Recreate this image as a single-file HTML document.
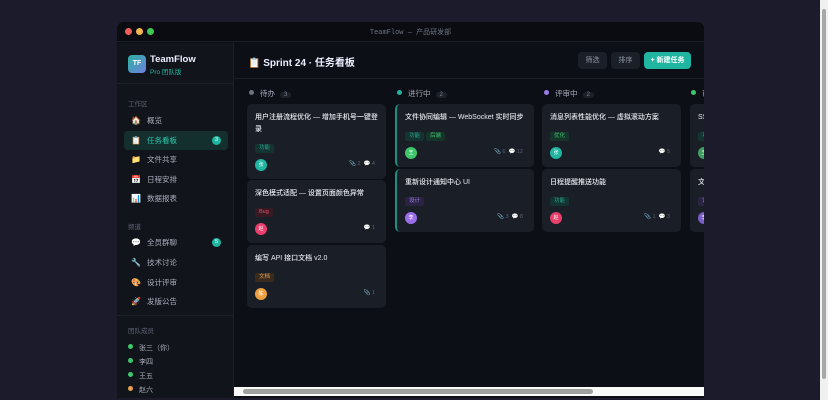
<!DOCTYPE html>
<html><head><meta charset="utf-8"><style>
*{box-sizing:border-box;margin:0;padding:0}
body{width:828px;height:400px;background:#1b1b2c;font-family:"Liberation Sans","Noto Sans CJK SC",sans-serif;overflow:hidden;position:relative;color:#e6e8ee}
.win{position:absolute;left:117px;top:22px;width:587px;height:376px;background:#0c0f16;border-radius:7px 7px 0 0;overflow:hidden}
.tb{position:absolute;left:0;top:0;width:587px;height:20px;background:#0a0c11;border-bottom:1px solid #1a1e27}
.dot{position:absolute;top:6px;width:7px;height:7px;border-radius:50%}
.tt{position:absolute;left:0;right:0;top:5px;text-align:center;font-family:"Liberation Mono","Noto Sans CJK SC",monospace;font-size:7px;color:#6b7280}
.sb{position:absolute;left:0;top:21px;width:117px;height:360px;background:#11141b;border-right:1px solid #1c2029}
.logo{position:absolute;left:11px;top:12px;width:18px;height:18px;border-radius:4px;background:linear-gradient(135deg,#2ab3a0,#6f7fe0);color:#fff;font-size:7px;font-weight:bold;text-align:center;line-height:18px}
.bn{position:absolute;left:33px;top:11px;font-size:9.5px;font-weight:bold;color:#eef}
.bs{position:absolute;left:33px;top:23px;font-size:6.5px;color:#20b8a0}
.hr{position:absolute;left:0;width:117px;height:1px;background:#1c2029}
.lab{position:absolute;left:11px;font-size:6.5px;color:#5d6472}
.it{position:absolute;left:7px;width:104px;height:19px;border-radius:4px;font-size:7.5px;color:#a9aebb;line-height:19px;padding-left:23px}
.it i{position:absolute;left:7px;top:0;font-style:normal;font-size:8px}
.it.act{background:#13302f;color:#2cc7ad}
.bdg{position:absolute;right:7px;top:5px;width:9px;height:9px;border-radius:50%;background:#1fb5a0;color:#fff;font-size:5.5px;text-align:center;line-height:9px}
.mem{position:absolute;left:11px;font-size:7px;color:#a9aebb}
.mem b{display:inline-block;width:5px;height:5px;border-radius:50%;margin-right:6px;vertical-align:1px}
.hd{position:absolute;left:117px;top:21px;width:470px;height:36px;border-bottom:1px solid #1a1e27}
.ht{position:absolute;left:14px;top:11px;font-size:10px;font-weight:bold;color:#eef}
.btn{position:absolute;top:9px;height:17px;border-radius:4px;font-size:7px;line-height:17px;text-align:center;background:#1b1f28;color:#8d93a0}
.ch{position:absolute;top:66px;font-size:7.5px;color:#a9aebb;white-space:nowrap}
.ch b{display:inline-block;width:5px;height:5px;border-radius:50%;margin-right:6px;vertical-align:1px}
.ch span{display:inline-block;background:#1d212a;border-radius:4px;padding:0 4px;font-size:6px;margin-left:5px;color:#7a8090}
.card{position:absolute;width:139px;background:#1a1e27;border-radius:5px;padding:8px 7px 8px 8px}
.card.pg{border-left:2px solid #1c8f80}
.ct{font-size:7px;color:#e8eaf0;line-height:12px;font-weight:500;white-space:nowrap;overflow:hidden}
.tag{display:inline-block;font-size:5.5px;padding:0 4px;height:9px;line-height:9px;border-radius:2px;margin:4px 2px 0 0}
.ft{position:relative;height:12px;margin-top:5px}
.av{position:absolute;left:0;top:0;width:12px;height:12px;border-radius:50%;color:#fff;font-size:5px;text-align:center;line-height:12px}
.mt{position:absolute;right:4px;top:2px;font-size:5.5px;color:#5d6472}
.hs{position:absolute;left:234px;top:387px;width:470px;height:9px;background:#fafafa}
.hs div{position:absolute;left:9px;top:2px;width:350px;height:5px;background:#a0a0a0;border-radius:3px}
.vs{position:absolute;left:820px;top:0;width:8px;height:400px;background:#f0f0f0}
.vs div{position:absolute;left:2px;top:9px;width:4px;height:370px;background:#a8a8a8;border-radius:2px}
</style></head><body>
<div class="win">
 <div class="tb"><div class="dot" style="left:8px;background:#ee5f5a"></div><div class="dot" style="left:19px;background:#f4b650"></div><div class="dot" style="left:30px;background:#3fc653"></div><div class="tt">TeamFlow — 产品研发部</div></div>
 <div class="sb">
  <div class="logo">TF</div><div class="bn">TeamFlow</div><div class="bs">Pro 团队版</div>
  <div class="hr" style="top:40px"></div>
  <div class="lab" style="top:55px">工作区</div>
  <div class="it" style="top:68px"><i>🏠</i>概览</div>
  <div class="it act" style="top:88px"><i>📋</i>任务看板<span class="bdg">3</span></div>
  <div class="it" style="top:107px"><i>📁</i>文件共享</div>
  <div class="it" style="top:127px"><i>📅</i>日程安排</div>
  <div class="it" style="top:146px"><i>📊</i>数据报表</div>
  <div class="lab" style="top:178px">频道</div>
  <div class="it" style="top:190px"><i>💬</i>全员群聊<span class="bdg">5</span></div>
  <div class="it" style="top:210px"><i>🔧</i>技术讨论</div>
  <div class="it" style="top:230px"><i>🎨</i>设计评审</div>
  <div class="it" style="top:249px"><i>🚀</i>发版公告</div>
  <div class="hr" style="top:272px"></div>
  <div class="lab" style="top:282px">团队成员</div>
  <div class="mem" style="top:300px"><b style="background:#3fc66a"></b>张三（你）</div>
  <div class="mem" style="top:314px"><b style="background:#3fc66a"></b>李四</div>
  <div class="mem" style="top:328px"><b style="background:#3fc66a"></b>王五</div>
  <div class="mem" style="top:342px"><b style="background:#e8a050"></b>赵六</div>
 </div>
 <div class="hd"><div class="ht">📋 Sprint 24 · 任务看板</div>
  <div class="btn" style="left:344px;width:29px">筛选</div>
  <div class="btn" style="left:377px;width:29px">排序</div>
  <div class="btn" style="left:410px;width:47px;background:#1fb5a0;color:#fff;font-weight:bold">+ 新建任务</div>
 </div>
 <div class="ch" style="left:132px"><b style="background:#6b7280"></b>待办<span>3</span></div>
 <div class="ch" style="left:280px"><b style="background:#1fb5a0"></b>进行中<span>2</span></div>
 <div class="ch" style="left:427px"><b style="background:#9b7de8"></b>评审中<span>2</span></div>
 <div class="ch" style="left:574px"><b style="background:#3fc66a"></b>已完成</div>

 <div class="card" style="left:130px;top:82px"><div class="ct">用户注册流程优化 — 增加手机号一键登<br>录</div><span class="tag" style="background:#133430;color:#2aa08f">功能</span><div class="ft"><div class="av" style="background:#1fb5a0">张</div><div class="mt">📎 2 &nbsp;💬 4</div></div></div>
 <div class="card" style="left:130px;top:158px"><div class="ct">深色模式适配 — 设置页面颜色异常</div><span class="tag" style="background:#3a1a22;color:#e0506a">Bug</span><div class="ft"><div class="av" style="background:#e83e6c">赵</div><div class="mt">💬 1</div></div></div>
 <div class="card" style="left:130px;top:223px"><div class="ct">编写 API 接口文档 v2.0</div><span class="tag" style="background:#3a2a1c;color:#e0a060">文档</span><div class="ft"><div class="av" style="background:#eea040">陈</div><div class="mt">📎 1</div></div></div>

 <div class="card pg" style="left:278px;top:82px"><div class="ct">文件协同编辑 — WebSocket 实时同步</div><span class="tag" style="background:#133430;color:#2aa08f">功能</span><span class="tag" style="background:#16352a;color:#3fbf70">后端</span><div class="ft"><div class="av" style="background:#3fc66a">王</div><div class="mt">📎 6 &nbsp;💬 12</div></div></div>
 <div class="card pg" style="left:278px;top:147px"><div class="ct">重新设计通知中心 UI</div><span class="tag" style="background:#2a2342;color:#9b7de8">设计</span><div class="ft"><div class="av" style="background:#9b6de8">李</div><div class="mt">📎 3 &nbsp;💬 8</div></div></div>

 <div class="card" style="left:425px;top:82px"><div class="ct">消息列表性能优化 — 虚拟滚动方案</div><span class="tag" style="background:#16352a;color:#3fbf70">优化</span><div class="ft"><div class="av" style="background:#1fb5a0">张</div><div class="mt">💬 5</div></div></div>
 <div class="card" style="left:425px;top:147px"><div class="ct">日程提醒推送功能</div><span class="tag" style="background:#133430;color:#2aa08f">功能</span><div class="ft"><div class="av" style="background:#e83e6c">赵</div><div class="mt">📎 1 &nbsp;💬 3</div></div></div>

 <div class="card" style="left:573px;top:82px"><div class="ct">SSO 单点登录</div><span class="tag" style="background:#133430;color:#2aa08f">功能</span><div class="ft"><div class="av" style="background:#3fa060">王</div></div></div>
 <div class="card" style="left:573px;top:147px"><div class="ct">文件上传组件</div><span class="tag" style="background:#2a2342;color:#9b7de8">设计</span><div class="ft"><div class="av" style="background:#7a5dc8">李</div></div></div>
</div>
<div class="hs"><div></div></div>
<div class="vs"><div></div></div>
</body></html>
